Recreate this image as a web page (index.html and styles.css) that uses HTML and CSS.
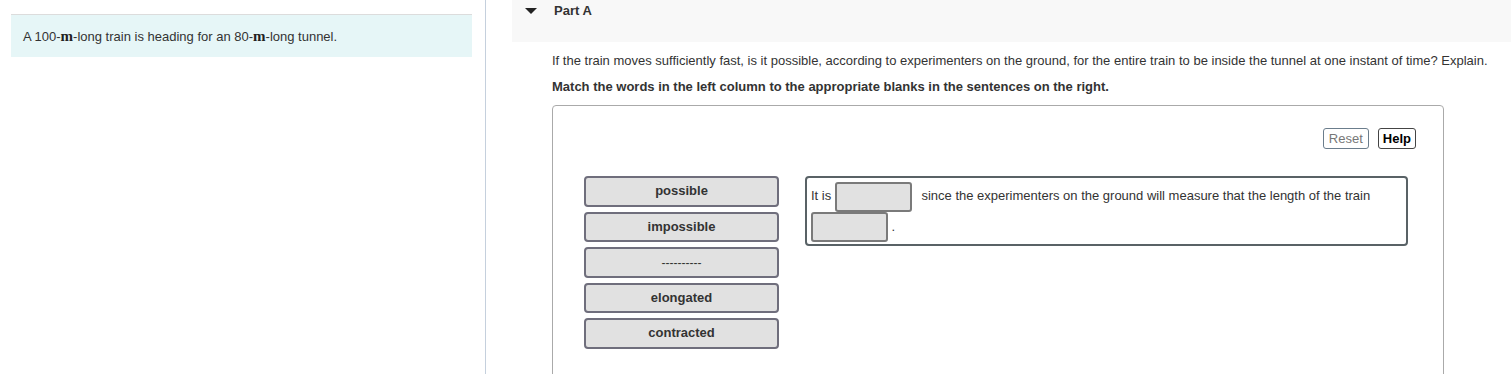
FILE: index.html
```html
<!DOCTYPE html>
<html>

<head>
    <title>Part A - Train and Tunnel</title>
    <link rel="stylesheet" href="styles.css">
</head>

<body>
    <div class="page">
        <div class="problem-col">
            <div class="problem-text">
                A 100-<span class="unit">m</span>-long train is heading for an 80-<span class="unit">m</span>-long tunnel.
            </div>
        </div>

        <div class="part-col">
            <div class="part-header">
                <span class="caret"></span>
                <span class="part-title">Part A</span>
            </div>

            <div class="part-body">
                <p class="question">If the train moves sufficiently fast, is it possible, according to experimenters on the ground, for the entire train to be inside the tunnel at one instant of time? Explain.</p>
                <p class="instructions">Match the words in the left column to the appropriate blanks in the sentences on the right.</p>

                <div class="dnd-box">
                    <div class="dnd-tools">
                        <button type="button" class="tool-btn reset">Reset</button>
                        <button type="button" class="tool-btn help">Help</button>
                    </div>

                    <div class="dnd-area">
                        <div class="word-list">
                            <div class="word">possible</div>
                            <div class="word">impossible</div>
                            <div class="word dashes">----------</div>
                            <div class="word">elongated</div>
                            <div class="word">contracted</div>
                        </div>

                        <div class="sentence">
                            It is <span class="blank first"></span> since the experimenters on the ground will measure that the length of the train
                            <span class="blank"></span> .
                        </div>
                    </div>
                </div>
            </div>
        </div>
    </div>
</body>

</html>
```

FILE: styles.css
```css
body {
    margin: 0;
    font-family: "Liberation Sans", Arial, sans-serif;
    font-size: 13px;
    color: #333;
    background: #fff;
}

.page {
    display: flex;
    height: 374px;
    overflow: hidden;
}

/* left column with the problem statement */
.problem-col {
    width: 474px;
    flex: none;
    padding: 14px 0 0 11px;
    border-right: 1px solid #c5d0dd;
}

.problem-text {
    width: 449px;
    background: #e6f6f7;
    border-top: 1px solid #dcdcdc;
    padding: 13px 0 12px 12px;
    line-height: 16px;
}

.unit {
    font-family: "Liberation Serif", "Times New Roman", serif;
    font-size: 15px;
    font-weight: bold;
    color: #222;
}

/* right column */
.part-col {
    flex: 1;
    margin-left: 26px;
}

.part-header {
    height: 42px;
    background: #f8f8f8;
    display: flex;
    align-items: flex-start;
    padding-top: 3px;
    box-sizing: border-box;
}

.caret {
    width: 0;
    height: 0;
    border-left: 6px solid transparent;
    border-right: 6px solid transparent;
    border-top: 6px solid #222;
    margin: 5px 0 0 13px;
}

.part-title {
    font-weight: bold;
    margin-left: 17px;
    line-height: 15px;
}

.part-body {
    padding-left: 40px;
}

.question {
    margin: 11px 0 0;
    line-height: 15px;
}

.instructions {
    margin: 11px 0 0;
    font-weight: bold;
    line-height: 15px;
}

.dnd-box {
    margin-top: 11px;
    width: 890px;
    height: 300px;
    border: 1px solid #aaa;
    border-radius: 4px;
}

.dnd-tools {
    display: flex;
    justify-content: flex-end;
    gap: 9px;
    padding: 22px 27px 0 0;
}

.tool-btn {
    font-family: "Liberation Sans", Arial, sans-serif;
    font-size: 13px;
    height: 21px;
    padding: 0 4px;
    background: #fff;
    border: 1px solid #6b7d8c;
    border-radius: 3px;
}

.tool-btn.reset {
    color: #777;
    padding: 0 5px;
}

.tool-btn.help {
    color: #000;
    font-weight: bold;
    border-color: #444;
}

.dnd-area {
    display: flex;
    gap: 26px;
    margin: 27px 0 0 31px;
}

.word-list {
    width: 195px;
}

.word {
    height: 30.5px;
    box-sizing: border-box;
    margin-bottom: 5px;
    background: #e1e1e1;
    border: 2px solid #6f6e7c;
    border-radius: 4px;
    font-weight: bold;
    text-align: center;
    line-height: 26px;
}

.word.dashes {
    font-weight: normal;
    font-size: 12px;
    line-height: 28px;
}

.sentence {
    width: 603px;
    height: 70px;
    box-sizing: border-box;
    border: 2px solid #596266;
    border-radius: 4px;
    padding: 3px 4px;
    line-height: 30.5px;
}

.blank {
    display: inline-block;
    width: 77px;
    height: 30px;
    box-sizing: border-box;
    background: #e1e1e1;
    border: 2px solid #7a7a7a;
    border-radius: 3px;
    vertical-align: middle;
}

.blank.first {
    margin-right: 6px;
}
```
